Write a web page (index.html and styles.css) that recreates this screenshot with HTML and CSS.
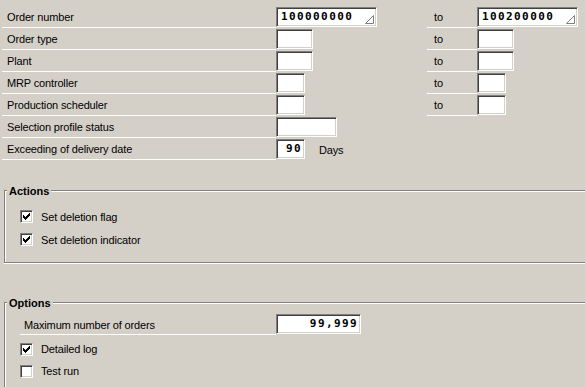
FILE: index.html
```html
<!DOCTYPE html>
<html lang="en">
<head>
    <meta charset="UTF-8">
    <title>Delete production orders</title>
    <link rel="stylesheet" href="styles.css">
</head>
<body>
    <div class="sel">
        <div class="row">
            <div class="lbl">Order number</div>
            <div class="cell">
                <div class="fld w101 mono">100000000
                    <svg class="grip" width="9" height="9" viewBox="0 0 9 9"><path d="M8.5 0.5V8.5H0.5Z" fill="none" stroke="#808080" stroke-width="1"/></svg>
                </div>
            </div>
            <div class="lbl to">to</div>
            <div class="cell">
                <div class="fld w101 mono">100200000
                    <svg class="grip" width="9" height="9" viewBox="0 0 9 9"><path d="M8.5 0.5V8.5H0.5Z" fill="none" stroke="#808080" stroke-width="1"/></svg>
                </div>
            </div>
        </div>
        <div class="row">
            <div class="lbl">Order type</div>
            <div class="cell"><div class="fld w37"></div></div>
            <div class="lbl to">to</div>
            <div class="cell"><div class="fld w37"></div></div>
        </div>
        <div class="row">
            <div class="lbl">Plant</div>
            <div class="cell"><div class="fld w37"></div></div>
            <div class="lbl to">to</div>
            <div class="cell"><div class="fld w37"></div></div>
        </div>
        <div class="row">
            <div class="lbl">MRP controller</div>
            <div class="cell"><div class="fld w29"></div></div>
            <div class="lbl to">to</div>
            <div class="cell"><div class="fld w29"></div></div>
        </div>
        <div class="row">
            <div class="lbl">Production scheduler</div>
            <div class="cell"><div class="fld w29"></div></div>
            <div class="lbl to">to</div>
            <div class="cell"><div class="fld w29"></div></div>
        </div>
        <div class="row">
            <div class="lbl">Selection profile status</div>
            <div class="cell"><div class="fld w61"></div></div>
        </div>
        <div class="row">
            <div class="lbl">Exceeding of delivery date</div>
            <div class="cell unit">
                <div class="fld w29 mono right">90</div>
                <span class="unit-text">Days</span>
            </div>
        </div>
    </div>

    <div class="frame actions">
        <div class="legend">Actions</div>
        <div class="cb-row">
            <span class="cb"><svg width="7" height="7" viewBox="0 0 7 7"><path d="M0 2h1v3H0zM1 3h1v3H1zM2 4h1v3H2zM3 3h1v3H3zM4 2h1v3H4zM5 1h1v3H5zM6 0h1v3H6z" fill="#000"/></svg></span>
            Set deletion flag
        </div>
        <div class="cb-row">
            <span class="cb"><svg width="7" height="7" viewBox="0 0 7 7"><path d="M0 2h1v3H0zM1 3h1v3H1zM2 4h1v3H2zM3 3h1v3H3zM4 2h1v3H4zM5 1h1v3H5zM6 0h1v3H6z" fill="#000"/></svg></span>
            Set deletion indicator
        </div>
    </div>

    <div class="frame options">
        <div class="legend">Options</div>
        <div class="opt-row">
            <div class="lbl">Maximum number of orders</div>
            <div class="cell"><div class="fld w85 mono right">99,999</div></div>
        </div>
        <div class="cb-row">
            <span class="cb"><svg width="7" height="7" viewBox="0 0 7 7"><path d="M0 2h1v3H0zM1 3h1v3H1zM2 4h1v3H2zM3 3h1v3H3zM4 2h1v3H4zM5 1h1v3H5zM6 0h1v3H6z" fill="#000"/></svg></span>
            Detailed log
        </div>
        <div class="cb-row">
            <span class="cb"></span>
            Test run
        </div>
    </div>
</body>
</html>
```

FILE: styles.css
```css
body {
    margin: 0;
    background-color: #d4d0c8; /* classic grey dialog */
    font-family: "Liberation Sans", Arial, sans-serif;
    font-size: 11px;
    letter-spacing: -0.15px;
    color: #000;
    overflow: hidden;
}
.sel {
    padding: 6px 0 0 2px;
}
.row {
    display: grid;
    grid-template-columns: 274px 151px 50px 1fr;
    height: 22px;
}
.lbl {
    box-sizing: border-box;
    height: 22px;
    line-height: 22px;
    padding-left: 5px;
    border-bottom: 1px solid #fff;
    white-space: nowrap;
}
.lbl.to {
    padding-left: 7px;
}
.cell {
    padding-top: 1px;
}
.cell.unit {
    display: flex;
    align-items: flex-start;
}
.unit-text {
    margin-left: 14px;
    line-height: 23px;
}
.fld {
    position: relative;
    box-sizing: border-box;
    height: 20px;
    background-color: #fff;
    border: 1px solid;
    border-color: #808080 #fff #fff #808080;
    box-shadow: inset 1px 1px 0 #404040, inset -1px -1px 0 #d4d0c8;
    padding: 0 4px;
    line-height: 18px;
}
.mono {
    font-family: "DejaVu Sans Mono", monospace;
    font-weight: bold;
    font-size: 11px;
    letter-spacing: 1.4px;
}
.right {
    text-align: right;
    padding-right: 2px;
}
.w101 { width: 101px; }
.w85 { width: 85px; }
.w61 { width: 61px; }
.w37 { width: 37px; }
.w29 { width: 29px; }
.grip {
    position: absolute;
    right: 2px;
    bottom: 2px;
}

/* group boxes */
.frame {
    position: relative;
    margin: 0 -20px 0 4px;
    border: 1px solid #808080;
    box-shadow: inset 1px 1px 0 #fff, 0 1px 0 #fff;
}
.legend {
    position: absolute;
    top: -6px;
    left: 2px;
    padding: 0 2px;
    background-color: #d4d0c8;
    font-weight: bold;
    letter-spacing: 0;
    line-height: 13px;
}
.actions {
    margin-top: 30px;
    padding: 14px 0 11px 15px;
}
.options {
    margin-top: 39px;
    padding: 10px 0 20px 15px;
}
.cb-row {
    display: flex;
    align-items: center;
    height: 23px;
}
.options .cb-row {
    height: 22px;
}
.cb {
    box-sizing: border-box;
    width: 13px;
    height: 13px;
    margin-right: 8px;
    display: flex;
    align-items: center;
    justify-content: center;
    background-color: #fff;
    border: 1px solid;
    border-color: #808080 #fff #fff #808080;
    box-shadow: inset 1px 1px 0 #404040, inset -1px -1px 0 #d4d0c8;
}
.opt-row {
    display: grid;
    grid-template-columns: 256px 1fr;
    height: 22px;
    margin-bottom: 3px;
}
.opt-row .lbl {
    padding-left: 4px;
    line-height: 24px;
}
```
